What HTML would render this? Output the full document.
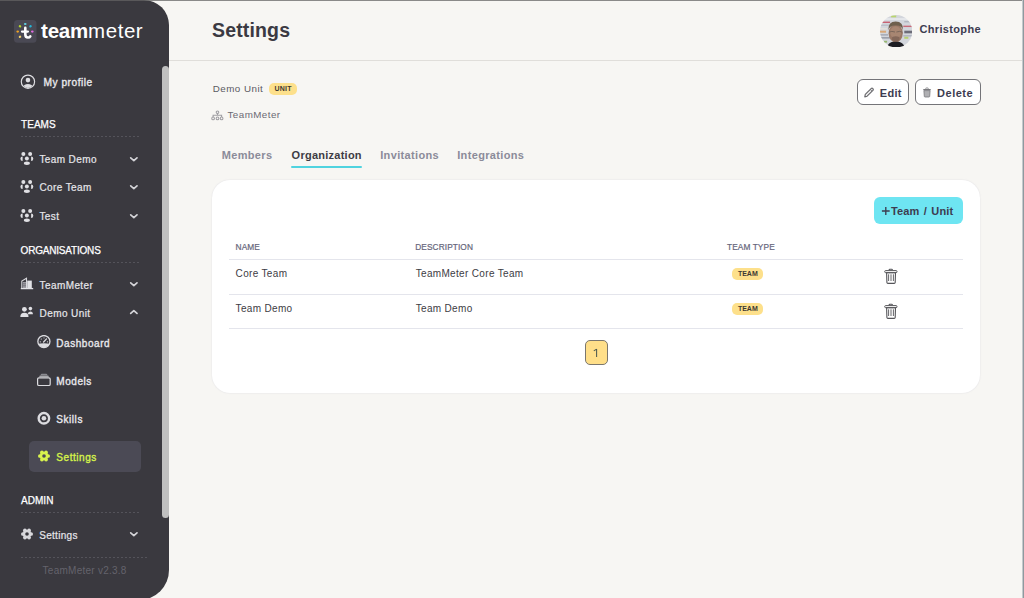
<!DOCTYPE html>
<html><head><meta charset="utf-8">
<style>
*{box-sizing:border-box;margin:0;padding:0}
html,body{width:1024px;height:598px;overflow:hidden;background:#f7f6f3;font-family:"Liberation Sans",sans-serif;}
.abs{position:absolute;white-space:nowrap;line-height:1}
.frame{position:absolute;left:0;top:0;width:1024px;height:1px;background:rgba(100,100,100,0.74)}
.frameR{position:absolute;left:1022px;top:0;width:2px;height:598px;background:linear-gradient(90deg,#c4c9cc 0 1px,#8f999e 1px 2px)}
.sb{position:absolute;left:0;top:0;width:169px;height:600px;background:#3a393f;border-radius:0 25px 30px 0;overflow:hidden}
.scroll{position:absolute;left:162px;top:66px;width:7px;height:452px;background:#c0c0c0;border-radius:3.5px}
.brand{left:41px;top:21px;font-size:20.5px;color:#fff}
.brand b{font-weight:bold;letter-spacing:-0.2px}
.brand span{font-weight:normal;letter-spacing:0.55px}
.sec{font-size:10px;color:#fff;letter-spacing:0.05px;-webkit-text-stroke:0.25px #fff}
.dots{position:absolute;left:21px;width:120px;height:1px;background:repeating-linear-gradient(90deg,#54535a 0 2px,transparent 2px 4px)}
.it{font-size:10px;color:#e6e6ea;letter-spacing:0.4px;-webkit-text-stroke:0.2px #e6e6ea}
.itb{font-size:10px;color:#e8e8ec;font-weight:normal;-webkit-text-stroke:0.35px #e8e8ec;letter-spacing:0.55px}
.chev{position:absolute;left:131px;width:5.5px;height:5.5px;border-right:1.6px solid #d6d6db;border-bottom:1.6px solid #d6d6db;transform:rotate(45deg)}
.active{position:absolute;left:29px;top:441px;width:112px;height:31px;background:#4b4a55;border-radius:5px}
.hdr{position:absolute;left:169px;top:60px;width:855px;height:1px;background:#e0deda}
.title{left:212px;top:21px;font-size:19.5px;font-weight:bold;color:#3b3a42;letter-spacing:0.15px}
.badge{position:absolute;background:#fde08b;border-radius:5px;font-weight:bold;color:#3d3a33;text-align:center;line-height:1}
.btn{position:absolute;height:26.4px;border:1px solid #747478;background:#fff;border-radius:6px}
.btxt{font-size:11px;font-weight:bold;color:#3d3c50}
.tab{font-size:11px;font-weight:bold;color:#8b8b99;letter-spacing:0.35px}
.card{position:absolute;left:212px;top:180px;width:768px;height:213px;background:#fff;border-radius:18px;box-shadow:0 0 1.5px rgba(150,150,175,0.3)}
.th{font-size:8.3px;color:#66667b;letter-spacing:0.1px;-webkit-text-stroke:0.2px #66667b}
.td{font-size:10px;color:#3d3c44;letter-spacing:0.33px}
.line{position:absolute;left:229px;width:734px;height:1px;background:#e4e5ec}
</style></head><body>
<div class="sb">
  <svg class="abs" style="left:13.8px;top:19.5px" width="23" height="23" viewBox="0 0 23 23">
    <rect x="0" y="0" width="22.5" height="22.8" rx="3.5" fill="#4a4954"/>
    <ellipse cx="11.25" cy="4" rx="1.3" ry="1.1" fill="#62d4e6"/>
    <ellipse cx="6" cy="6.3" rx="1.3" ry="1.1" fill="#b6d92c" transform="rotate(30 6 6.3)"/>
    <ellipse cx="16.5" cy="6.3" rx="1.3" ry="1.1" fill="#24b6d6" transform="rotate(-30 16.5 6.3)"/>
    <ellipse cx="3.7" cy="11.55" rx="1.35" ry="1.1" fill="#f0a322"/>
    <ellipse cx="18.3" cy="11.55" rx="1.35" ry="1.1" fill="#e26ce2"/>
    <ellipse cx="6" cy="16.8" rx="1.3" ry="1.1" fill="#f3d26a" transform="rotate(-30 6 16.8)"/>
    <path d="M11.3 7.9 V14.3 Q11.3 17.5 14 17.5 Q15.6 17.5 16.3 16.3" stroke="#fff" stroke-width="2.6" fill="none" stroke-linecap="round"/>
    <path d="M8 11.6 H13.9" stroke="#fff" stroke-width="2.3" stroke-linecap="round"/>
  </svg>
  <div class="abs brand"><b>team</b><span>meter</span></div>
  <div class="scroll"></div>

  <svg class="abs" style="left:19.5px;top:73.5px" width="16" height="16" viewBox="0 0 16 16">
    <defs><clipPath id="pc"><circle cx="7.95" cy="7.7" r="6.2"/></clipPath></defs>
    <circle cx="7.95" cy="7.7" r="6.65" stroke="#dcdce0" stroke-width="1.2" fill="none"/>
    <circle cx="7.95" cy="6.1" r="2.3" fill="#dcdce0"/>
    <g clip-path="url(#pc)"><ellipse cx="7.95" cy="13.4" rx="4.9" ry="3.4" fill="#dcdce0"/></g>
  </svg>
  <div class="abs itb" style="left:43.5px;top:78px;font-size:10.2px;letter-spacing:0.5px">My profile</div>

  <div class="abs sec" style="left:21px;top:120px">TEAMS</div>
  <div class="dots" style="top:136px"></div>

  <svg class="abs" style="left:19px;top:151px" width="16" height="16" viewBox="0 0 16 16" fill="#e0e0e4">
    <circle cx="4.35" cy="2.9" r="2"/><circle cx="11.15" cy="2.9" r="2"/>
    <circle cx="7.85" cy="7.5" r="2"/>
    <path d="M3.6 5.6 A2.2 2.2 0 0 0 3.6 10 Z"/><path d="M12.1 5.6 A2.2 2.2 0 0 1 12.1 10 Z"/>
    <ellipse cx="7.85" cy="12.3" rx="3" ry="1.7"/>
  </svg>
  <div class="abs it" style="left:39.4px;top:155px">Team Demo</div>
  <svg class="abs" style="left:19px;top:179px" width="16" height="16" viewBox="0 0 16 16" fill="#e0e0e4">
    <circle cx="4.35" cy="2.9" r="2"/><circle cx="11.15" cy="2.9" r="2"/>
    <circle cx="7.85" cy="7.5" r="2"/>
    <path d="M3.6 5.6 A2.2 2.2 0 0 0 3.6 10 Z"/><path d="M12.1 5.6 A2.2 2.2 0 0 1 12.1 10 Z"/>
    <ellipse cx="7.85" cy="12.3" rx="3" ry="1.7"/>
  </svg>
  <div class="abs it" style="left:39.4px;top:183px">Core Team</div>
  <svg class="abs" style="left:19px;top:208px" width="16" height="16" viewBox="0 0 16 16" fill="#e0e0e4">
    <circle cx="4.35" cy="2.9" r="2"/><circle cx="11.15" cy="2.9" r="2"/>
    <circle cx="7.85" cy="7.5" r="2"/>
    <path d="M3.6 5.6 A2.2 2.2 0 0 0 3.6 10 Z"/><path d="M12.1 5.6 A2.2 2.2 0 0 1 12.1 10 Z"/>
    <ellipse cx="7.85" cy="12.3" rx="3" ry="1.7"/>
  </svg>
  <div class="abs it" style="left:39.4px;top:212px">Test</div>

  <div class="abs sec" style="left:20.6px;top:246px;letter-spacing:-0.2px">ORGANISATIONS</div>
  <div class="dots" style="top:262px"></div>

  <svg class="abs" style="left:20px;top:277px" width="14" height="13" viewBox="0 0 14 13">
    <path d="M1.8 11.5 V4 L6.5 1.2 V11.5" stroke="#d8d8dc" stroke-width="1.1" fill="none"/>
    <rect x="2.8" y="5" width="3.2" height="6" fill="#9d9ca3"/>
    <rect x="7.2" y="3.6" width="4.6" height="7.9" fill="#e2e2e6"/>
    <path d="M0.8 11.6 H13.2" stroke="#e2e2e6" stroke-width="1.3"/>
    <path d="M2.8 6.8 H6 M2.8 8.8 H6" stroke="#5c5b62" stroke-width="0.6"/>
  </svg>
  <div class="abs it" style="left:39.6px;top:280.5px">TeamMeter</div>
  <svg class="abs" style="left:20px;top:306px" width="14" height="12" viewBox="0 0 14 12" fill="#e0e0e4">
    <circle cx="4.4" cy="3.3" r="2.4"/>
    <path d="M0.3 11 Q0.3 6.8 4.4 6.8 Q8.5 6.8 8.5 11 Z"/>
    <circle cx="10.4" cy="2.6" r="1.8"/>
    <path d="M7.6 8.2 Q8 5.6 10.4 5.6 Q12.9 5.6 12.9 8.2 Z"/>
  </svg>
  <div class="abs it" style="left:39.6px;top:309px">Demo Unit</div>

  <svg class="abs" style="left:36px;top:335px" width="16" height="15" viewBox="0 0 16 15">
    <defs><clipPath id="gc"><circle cx="7.9" cy="6.6" r="6"/></clipPath></defs>
    <circle cx="7.9" cy="6.6" r="6.05" stroke="#dcdce0" stroke-width="1.3" fill="none"/>
    <g clip-path="url(#gc)"><path d="M0 9 Q7.9 7.4 16 9 V15 H0Z" fill="#dcdce0"/></g>
    <path d="M7.6 7 L10.5 3.9" stroke="#dcdce0" stroke-width="1.3" stroke-linecap="round"/>
    <circle cx="5.3" cy="4" r="0.6" fill="#dcdce0"/><circle cx="8" cy="2.9" r="0.55" fill="#b8b8bc"/><circle cx="4.3" cy="6.8" r="0.6" fill="#dcdce0"/><circle cx="11.5" cy="6.8" r="0.6" fill="#dcdce0"/>
  </svg>
  <div class="abs itb" style="left:56.3px;top:338.5px">Dashboard</div>
  <svg class="abs" style="left:36px;top:373px" width="16" height="14" viewBox="0 0 16 14">
    <rect x="1.6" y="4.8" width="12.6" height="7.7" rx="1.3" stroke="#dcdce0" stroke-width="1.2" fill="none"/>
    <path d="M3.2 3.9 Q3.2 2.6 4.5 2.6 H11.5 Q12.8 2.6 12.8 3.9 Z" fill="#a8a8ad"/>
    <path d="M4.6 2.2 Q4.6 0.8 6 0.8 H10 Q11.4 0.8 11.4 2.2 Z" fill="#8a8a90"/>
  </svg>
  <div class="abs itb" style="left:56.3px;top:376.5px">Models</div>
  <svg class="abs" style="left:36px;top:411px" width="16" height="16" viewBox="0 0 16 16">
    <circle cx="7.9" cy="7.3" r="5.25" stroke="#dcdce0" stroke-width="2.4" fill="none"/>
    <circle cx="7.9" cy="7.3" r="2.3" fill="#dcdce0"/>
  </svg>
  <div class="abs itb" style="left:56.3px;top:414.5px">Skills</div>
  <div class="active"></div>
  <svg class="abs" style="left:35.9px;top:448.2px" width="16" height="16" viewBox="-8 -8 16 16">
    <g fill="#d8f24e"><circle r="4.3"/><circle cx="4.15" cy="0" r="1.85"/><circle cx="2.08" cy="3.6" r="1.85"/><circle cx="-2.08" cy="3.6" r="1.85"/><circle cx="-4.15" cy="0" r="1.85"/><circle cx="-2.08" cy="-3.6" r="1.85"/><circle cx="2.08" cy="-3.6" r="1.85"/></g><circle r="1.8" fill="#4b4a55"/>
  </svg>
  <div class="abs itb" style="left:56.3px;top:452.5px;color:#d6f24a;-webkit-text-stroke:0.35px #d6f24a">Settings</div>

  <svg class="abs" style="left:129px;top:156px" width="10" height="6" viewBox="0 0 10 6"><path d="M1.7 1.9 L4.85 4.7 L8 1.9" stroke="#d4d4d8" stroke-width="1.7" fill="none" stroke-linecap="round" stroke-linejoin="round"/></svg>
  <svg class="abs" style="left:129px;top:184.1px" width="10" height="6" viewBox="0 0 10 6"><path d="M1.7 1.9 L4.85 4.7 L8 1.9" stroke="#d4d4d8" stroke-width="1.7" fill="none" stroke-linecap="round" stroke-linejoin="round"/></svg>
  <svg class="abs" style="left:129px;top:212.7px" width="10" height="6" viewBox="0 0 10 6"><path d="M1.7 1.9 L4.85 4.7 L8 1.9" stroke="#d4d4d8" stroke-width="1.7" fill="none" stroke-linecap="round" stroke-linejoin="round"/></svg>
  <svg class="abs" style="left:129px;top:281.3px" width="10" height="6" viewBox="0 0 10 6"><path d="M1.7 1.9 L4.85 4.7 L8 1.9" stroke="#d4d4d8" stroke-width="1.7" fill="none" stroke-linecap="round" stroke-linejoin="round"/></svg>
  <svg class="abs" style="left:129px;top:309.4px" width="10" height="6" viewBox="0 0 10 6"><path d="M1.7 4.4 L4.85 1.6 L8 4.4" stroke="#d4d4d8" stroke-width="1.7" fill="none" stroke-linecap="round" stroke-linejoin="round"/></svg>
  <svg class="abs" style="left:129px;top:531px" width="10" height="6" viewBox="0 0 10 6"><path d="M1.7 1.9 L4.85 4.7 L8 1.9" stroke="#d4d4d8" stroke-width="1.7" fill="none" stroke-linecap="round" stroke-linejoin="round"/></svg>
  <div class="abs sec" style="left:21px;top:496px">ADMIN</div>
  <div class="dots" style="top:511.5px"></div>
  <svg class="abs" style="left:18.9px;top:525.5px" width="16" height="16" viewBox="-8 -8 16 16">
    <g fill="#d8d8dc"><circle r="4.3"/><circle cx="4.15" cy="0" r="1.85"/><circle cx="2.08" cy="3.6" r="1.85"/><circle cx="-2.08" cy="3.6" r="1.85"/><circle cx="-4.15" cy="0" r="1.85"/><circle cx="-2.08" cy="-3.6" r="1.85"/><circle cx="2.08" cy="-3.6" r="1.85"/></g><circle r="1.8" fill="#3a393f"/>
  </svg>
  <div class="abs it" style="left:39.2px;top:530.5px;letter-spacing:0.3px">Settings</div>
  <div class="dots" style="top:556.5px;width:128px"></div>
  <div class="abs" style="left:42.6px;top:565.6px;font-size:10px;color:#64636c;letter-spacing:0.25px">TeamMeter v2.3.8</div>
</div>

<div class="abs title">Settings</div>
<div class="hdr"></div>
<svg class="abs" style="left:880px;top:14.7px" width="32.4" height="32.4" viewBox="0 0 32 32">
  <defs><clipPath id="av"><circle cx="16" cy="16" r="16"/></clipPath><filter id="bl" x="-10%" y="-10%" width="120%" height="120%"><feGaussianBlur stdDeviation="0.45"/></filter></defs>
  <g clip-path="url(#av)"><g filter="url(#bl)">
    <rect width="32" height="32" fill="#d3d6dc"/>
    <rect x="0" y="3" width="32" height="2" fill="#e4e6ea"/>
    <rect x="2" y="6.5" width="8" height="1.4" fill="#c86272"/>
    <rect x="0" y="9.5" width="9" height="1.2" fill="#b8bcc6"/>
    <rect x="0" y="13" width="7" height="1.3" fill="#e7e2da"/>
    <rect x="0" y="15.5" width="6" height="2" fill="#d9a878"/>
    <rect x="0" y="19" width="8" height="1.3" fill="#a0a4b0"/>
    <rect x="1" y="22" width="9" height="1.2" fill="#8a8e9a"/>
    <rect x="23" y="10.5" width="9" height="1.4" fill="#c86a78"/>
    <rect x="24" y="6" width="6" height="1.3" fill="#b0b4be"/>
    <rect x="24" y="15.5" width="8" height="2.6" fill="#6c6c78"/>
    <rect x="23" y="20" width="9" height="1.2" fill="#a8acb8"/>
    <rect x="11" y="0.5" width="5" height="1.8" fill="#b9d56e"/>
    <rect x="24" y="21.5" width="4" height="2" fill="#b8d070"/>
    <rect x="4" y="25.5" width="3" height="1.8" fill="#98b870"/>
    <ellipse cx="15.5" cy="18" rx="7" ry="9.2" fill="#9a7866"/>
    <ellipse cx="15.5" cy="17" rx="5.5" ry="6" fill="#a88672"/>
    <path d="M8.2 15 Q7.8 6.5 15.5 6.4 Q23.2 6.5 22.8 15 Q21.5 10 15.5 10.3 Q9.5 10 8.2 15Z" fill="#6e5e4e"/>
    <path d="M9 17 Q11.5 15.5 14.8 16.8 M16.2 16.8 Q19.5 15.5 22.2 17" stroke="#6e5e54" stroke-width="0.8" fill="none"/>
    <ellipse cx="15.5" cy="23.5" rx="3.8" ry="2.4" fill="#84675a"/>
    <path d="M7 32 Q8 26 15.5 26.5 Q23 26 24.5 32Z" fill="#1f1f23"/>
  </g></g>
</svg>
<div class="abs btxt" style="left:919.4px;top:24px;letter-spacing:0.35px">Christophe</div>

<div class="abs" style="left:212.7px;top:83.6px;font-size:9.8px;color:#5b5a62;letter-spacing:0.48px">Demo Unit</div>
<div class="badge" style="left:269.4px;top:82.9px;width:27.4px;height:12.4px;font-size:7px;line-height:12.4px;letter-spacing:0.2px">UNIT</div>
<svg class="abs" style="left:211px;top:110.2px" width="13" height="11" viewBox="0 0 13 11" fill="none" stroke="#a09fa3" stroke-width="1.05">
  <circle cx="6.5" cy="2.3" r="1.3"/>
  <path d="M6.5 3.6 V5.2 M2.1 7 V5.2 H10.6 V7"/>
  <circle cx="2.1" cy="8.4" r="1.35"/><circle cx="6.5" cy="8.4" r="1.35"/><circle cx="10.6" cy="8.4" r="1.35"/>
</svg>
<div class="abs" style="left:227.5px;top:110px;font-size:9.8px;color:#6b6a73;letter-spacing:0.45px">TeamMeter</div>

<div class="btn" style="left:857px;top:79px;width:52px"></div>
<svg class="abs" style="left:863px;top:87px" width="12" height="11" viewBox="0 0 12 11">
  <path d="M1.8 9.9 L2.3 7.4 L8.1 1.6 Q9 0.8 9.9 1.6 Q10.7 2.5 9.9 3.4 L4.1 9.2 Z" stroke="#6a6a6e" stroke-width="1.2" fill="#f4f4f4" stroke-linejoin="round"/>
  <path d="M7.3 2.5 L9 4.2" stroke="#6a6a6e" stroke-width="0.9"/>
</svg>
<div class="abs btxt" style="left:879.8px;top:88px;letter-spacing:0.3px">Edit</div>
<div class="btn" style="left:915px;top:79px;width:66px"></div>
<svg class="abs" style="left:922px;top:87px" width="10" height="11" viewBox="0 0 10 11">
  <path d="M3.6 1.7 Q3.6 1 4.3 1 H5.7 Q6.4 1 6.4 1.7" stroke="#7a7a7e" stroke-width="0.9" fill="none"/>
  <rect x="1.2" y="1.9" width="7.6" height="1.3" rx="0.5" fill="#7a7a7e"/>
  <path d="M1.9 3.6 H8.1 L7.7 9.4 Q7.6 10 7 10 H3 Q2.4 10 2.3 9.4 Z" fill="#b0b0b3" stroke="#7a7a7e" stroke-width="0.8"/>
</svg>
<div class="abs btxt" style="left:937.1px;top:88px;letter-spacing:0.5px">Delete</div>

<div class="abs tab" style="left:221.7px;top:149.8px">Members</div>
<div class="abs tab" style="left:291.6px;top:149.8px;color:#3d3c44;letter-spacing:0.25px">Organization</div>
<div class="abs" style="left:290.5px;top:166.2px;width:71px;height:2.3px;background:#50d3df;border-radius:1px"></div>
<div class="abs tab" style="left:380.2px;top:149.8px">Invitations</div>
<div class="abs tab" style="left:457.2px;top:149.8px">Integrations</div>

<div class="card"></div>
<div class="abs" style="left:874px;top:196.6px;width:89.4px;height:27px;background:#6ee5f2;border-radius:6px"></div>
<svg class="abs" style="left:881px;top:206px" width="10" height="10" viewBox="0 0 10 10"><path d="M4.8 1 V9 M0.9 5 H8.7" stroke="#3d3c50" stroke-width="1.35"/></svg><div class="abs btxt" style="left:891px;top:205.5px;letter-spacing:0.15px;word-spacing:1.1px">Team / Unit</div>

<div class="abs th" style="left:235.6px;top:242.8px">NAME</div>
<div class="abs th" style="left:415.2px;top:242.8px">DESCRIPTION</div>
<div class="abs th" style="left:727px;top:242.8px">TEAM TYPE</div>
<div class="line" style="top:259px"></div>
<div class="abs td" style="left:235.6px;top:269px">Core Team</div>
<div class="abs td" style="left:415.7px;top:269px">TeamMeter Core Team</div>
<div class="badge" style="left:732.3px;top:268px;width:31.1px;height:12px;font-size:7px;line-height:12px">TEAM</div>
<svg class="abs" style="left:883px;top:268px" width="16" height="17" viewBox="0 0 16 17">
  <path d="M6.1 2.1 Q6.1 1.3 6.9 1.3 H8.6 Q9.4 1.3 9.4 2.1" stroke="#555559" stroke-width="1.1" fill="none"/>
  <rect x="1.7" y="2.6" width="12.3" height="2.1" rx="1" stroke="#555559" stroke-width="1" fill="none"/>
  <path d="M3.6 4.8 H12.5 L12.2 14.5 Q12.1 15.4 11.2 15.4 H4.9 Q4 15.4 3.9 14.5 Z" stroke="#555559" stroke-width="1.1" fill="none"/>
  <path d="M5.6 6.3 V13 M8 6.3 V13 M10.4 6.3 V13" stroke="#555559" stroke-width="0.9"/>
</svg>
<div class="line" style="top:294px"></div>
<div class="abs td" style="left:235.6px;top:303.5px">Team Demo</div>
<div class="abs td" style="left:415.7px;top:303.5px">Team Demo</div>
<div class="badge" style="left:732.3px;top:302.5px;width:31.1px;height:12px;font-size:7px;line-height:12px">TEAM</div>
<svg class="abs" style="left:883px;top:302.5px" width="16" height="17" viewBox="0 0 16 17">
  <path d="M6.1 2.1 Q6.1 1.3 6.9 1.3 H8.6 Q9.4 1.3 9.4 2.1" stroke="#555559" stroke-width="1.1" fill="none"/>
  <rect x="1.7" y="2.6" width="12.3" height="2.1" rx="1" stroke="#555559" stroke-width="1" fill="none"/>
  <path d="M3.6 4.8 H12.5 L12.2 14.5 Q12.1 15.4 11.2 15.4 H4.9 Q4 15.4 3.9 14.5 Z" stroke="#555559" stroke-width="1.1" fill="none"/>
  <path d="M5.6 6.3 V13 M8 6.3 V13 M10.4 6.3 V13" stroke="#555559" stroke-width="0.9"/>
</svg>
<div class="line" style="top:328px"></div>

<div class="abs" style="left:585px;top:340.4px;width:22.6px;height:24.4px;background:#ffdf89;border:1px solid #7b776e;border-radius:5px"></div>
<svg class="abs" style="left:590px;top:347px" width="12" height="12" viewBox="0 0 12 12"><path d="M6.6 2.1 V10 M6.6 2.1 L3.8 3.9" stroke="#4e5a50" stroke-width="1.05" fill="none" stroke-linejoin="round"/></svg>
<div class="frame"></div>
<div class="frameR"></div>
</body></html>
